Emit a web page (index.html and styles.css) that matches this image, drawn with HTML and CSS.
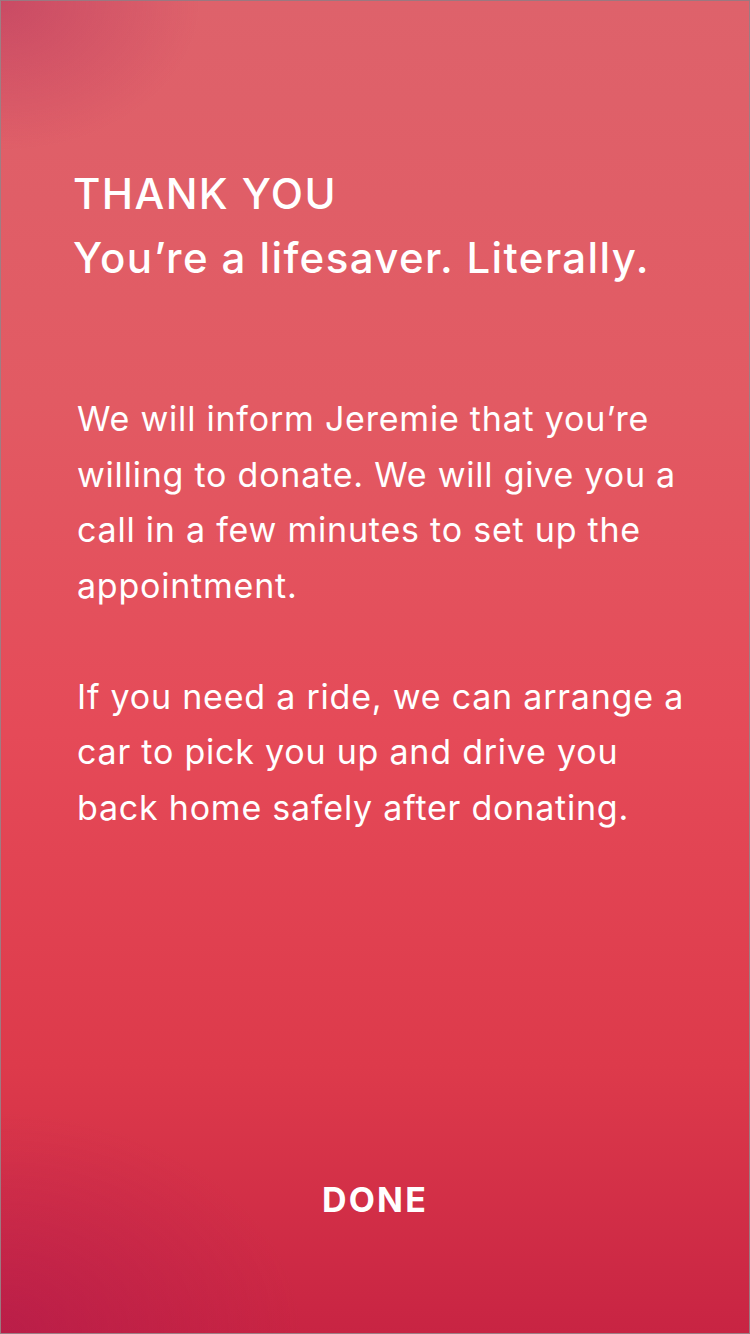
FILE: index.html
```html
<!DOCTYPE html>
<html lang="en">
<head>
<meta charset="utf-8">
<title>Thank you</title>
<link rel="stylesheet" href="styles.css">
</head>
<body>
<main class="screen">
  <header class="heading">
    <h1 class="eyebrow">THANK YOU</h1>
    <p class="headline">You’re a lifesaver. Literally.</p>
  </header>
  <section class="message">
    <p>We will inform Jeremie that you’re willing to donate. We will give you a call in a few minutes to set up the appointment.</p>
    <p>If you need a ride, we can arrange a car to pick you up and drive you back home safely after donating.</p>
  </section>
  <footer class="actions">
    <button class="done" type="button">DONE</button>
  </footer>
</main>
</body>
</html>
```
FILE: styles.css
```css
* { box-sizing: border-box; }
html, body { margin: 0; padding: 0; }
body {
  width: 750px;
  height: 1334px;
  overflow: hidden;
  font-family: Inter, "Noto Sans", "Liberation Sans", sans-serif;
  color: #fff;
}
.screen {
  width: 750px;
  height: 1334px;
  display: flex;
  flex-direction: column;
  padding: 161px 0 113px 0;
  border: 1px solid rgba(150, 130, 135, 0.9);
  background:
    radial-gradient(ellipse 200px 150px at 0 0, rgba(170, 40, 90, 0.4), rgba(170, 40, 90, 0) 100%),
    radial-gradient(ellipse 300px 220px at 0 100%, rgba(165, 20, 80, 0.4), rgba(165, 20, 80, 0) 100%),
    linear-gradient(180deg, #de626b 0%, #e25a63 30%, #e54a58 55%, #dd3a4b 80%, #c82443 100%);
}
.heading { padding-left: 72px; }
.eyebrow, .headline {
  margin: 0;
  font-size: 42px;
  line-height: 64px;
  font-weight: 500;
  letter-spacing: 1.4px;
}
.message {
  margin-top: 101px;
  padding-left: 76px;
  width: 698px;
}
.message p {
  margin: 0 0 55.5px 0;
  font-size: 34px;
  line-height: 55.5px;
  font-weight: 400;
  letter-spacing: 0.78px;
}
.actions {
  margin-top: auto;
  display: flex;
  justify-content: center;
}
.done {
  background: none;
  border: 0;
  padding: 0;
  color: #fff;
  font-family: inherit;
  font-size: 34px;
  line-height: 40px;
  font-weight: 700;
  letter-spacing: 2.2px;
}
```
